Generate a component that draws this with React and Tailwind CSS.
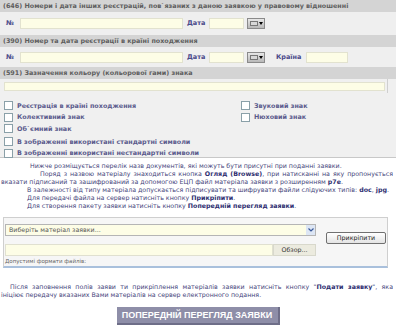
import React from "react";

function CalBtn() {
  return (
    <div className="w-[18px] h-[11px] border border-[#8a8a8a] bg-gradient-to-b from-[#e8e8e8] to-[#b8b8b8] flex items-center justify-end pr-[1px] gap-[1px]">
      <div className="w-[8px] h-[5px] border border-[#777] bg-[#d8d8d8]" />
      <div className="w-0 h-0 border-l-[2px] border-r-[2px] border-t-[3px] border-l-transparent border-r-transparent border-t-black" />
    </div>
  );
}

function Check({ label }) {
  return (
    <div className="flex items-center h-[11.5px]">
      <div className="w-[9px] h-[9px] border border-[#8aa0a8] bg-white mr-[4px] shrink-0" />
      <span className="font-bold text-[6.4px] text-[#5a5a8c] whitespace-nowrap">{label}</span>
    </div>
  );
}

function Header({ children }) {
  return (
    <div className="h-[12px] bg-[#d4d4d4] pl-[3px] flex items-center font-bold text-[6.4px] text-[#5e5e5e] whitespace-nowrap">
      {children}
    </div>
  );
}

export default function App() {
  const yellow = "bg-[#fdfde6] border border-[#e2e2cf]";
  const lbl = "font-bold text-[6.5px] text-[#4a4a8a]";
  const b = "text-[#2e2e70]";
  return (
    <div className="w-[396px] h-[336px] bg-white overflow-hidden font-['DejaVu_Sans',sans-serif] text-[6.3px] leading-none">
      <Header>(646) Номери і дата інших реєстрацій, пов`язаних з даною заявкою у правовому відношенні</Header>
      <div className="h-[23px] bg-[#efefef] flex items-center">
        <span className={`w-[20px] pl-[6px] ${lbl}`}>№</span>
        <div className={`w-[163px] h-[11px] ${yellow}`} />
        <span className={`ml-[4px] w-[22px] ${lbl}`}>Дата</span>
        <div className={`w-[35px] h-[11px] ${yellow}`} />
        <div className="ml-[3px]"><CalBtn /></div>
      </div>
      <Header>(390) Номер та дата реєстрації в країні походження</Header>
      <div className="h-[20px] bg-[#efefef] flex items-center">
        <span className={`w-[20px] pl-[6px] ${lbl}`}>№</span>
        <div className={`w-[163px] h-[11px] ${yellow}`} />
        <span className={`ml-[4px] w-[22px] ${lbl}`}>Дата</span>
        <div className={`w-[35px] h-[11px] ${yellow}`} />
        <div className="ml-[3px]"><CalBtn /></div>
        <span className={`ml-[11px] w-[30px] ${lbl}`}>Країна</span>
        <div className={`w-[42px] h-[11px] ${yellow}`} />
      </div>
      <Header>(591) Зазначення кольору (кольорової гами) знака</Header>
      <div className="h-[79px] bg-[#f0f0f0] border-b border-[#c8c8c8] pt-[3px] pl-[4px]">
        <div className="flex items-start">
          <div className={`w-[381px] h-[9px] ${yellow}`} />
          <div className="ml-[2px] w-[1px] h-[14px] bg-[#cfcfcf] -mt-[3px]" />
        </div>
        <div className="mt-[7px] flex">
          <div className="w-[237px]">
            <Check label="Реєстрація в країні походження" />
            <Check label="Колективний знак" />
            <Check label="Об`ємний знак" />
          </div>
          <div>
            <Check label="Звуковий знак" />
            <Check label="Нюховий знак" />
          </div>
        </div>
        <div className="mt-[1.5px]">
          <Check label="В зображенні використані стандартні символи" />
          <Check label="В зображенні використані нестандартні символи" />
        </div>
      </div>

      <div className="mt-[4px] text-[#44447a] leading-[8px] whitespace-nowrap">
        <div className="pl-[30px]">Нижче розміщується перелік назв документів, які можуть бути присутні при поданні заявки.</div>
        <div className="pl-[40px] w-[393px] text-justify [text-align-last:justify] whitespace-normal h-[8px] overflow-hidden">
          Поряд з назвою матеріалу знаходиться кнопка <b className={b}>Огляд (Browse)</b>, при натисканні на яку пропонується
        </div>
        <div className="pl-[1px]">вказати підписаний та зашифрований за допомогою ЕЦП файл матеріала заявки з розширенням <b className={b}>p7e</b>.</div>
        <div className="pl-[27px]">В залежності від типу матеріала допускається підписувати та шифрувати файли слідуючих типів: <b className={b}>doc</b>, <b className={b}>jpg</b>.</div>
        <div className="pl-[27px]">Для передачі файла на сервер натисніть кнопку <b className={b}>Прикріпити</b>.</div>
        <div className="pl-[27px]">Для створення пакету заявки натисніть кнопку <b className={b}>Попередній перегляд заявки</b>.</div>
      </div>

      <div className="mt-[7px] ml-[3px] w-[385px] h-[51px] border-t border-l border-r border-[#cfcfcf] border-b-2 border-b-[#a9c0dc] bg-[#f6f6f6] pt-[6px] pl-[1px]">
        <div className="flex">
          <div className="w-[311px]">
            <div className="h-[12px] bg-[#fdfde6] border border-[#b5b5b5] flex items-center">
              <span className="pl-[3px] flex-1 text-[#555]">Виберіть матеріал заявки...</span>
              <div className="w-[9px] h-[10px] bg-[#dde6f4] flex items-center justify-center">
                <svg width="6" height="4" viewBox="0 0 6 4"><path d="M0.5 0.5 L3 3 L5.5 0.5" stroke="#3a5a9a" strokeWidth="1.2" fill="none" /></svg>
              </div>
            </div>
            <div className="mt-[8px] flex h-[12px]">
              <div className="w-[268px] bg-[#fdfde6] border border-[#e0e0d0]" />
              <div className="w-[43px] bg-[#ecebdf] border border-[#d8d8cc] flex items-center justify-center text-[#333]">Обзор...</div>
            </div>
          </div>
          <div className="ml-[10px] mt-[8px] w-[60px] h-[12px] border border-[#707070] rounded-[2px] bg-gradient-to-b from-[#ffffff] to-[#e4e4e4] flex items-center justify-center text-[#222]">
            Прикріпити
          </div>
        </div>
        <div className="mt-[3px] text-[5.5px] text-[#666]">Допустимі формати файлів:</div>
      </div>

      <div className="mt-[15px] text-[#44447a] leading-[8px] whitespace-nowrap">
        <div className="pl-[10px] w-[393px] text-justify [text-align-last:justify] whitespace-normal h-[8px] overflow-hidden">
          Після заповнення полів заяви ти прикріплення матеріалів заявки натисніть кнопку "<b className={b}>Подати заявку</b>", яка
        </div>
        <div className="pl-[1px]">ініціює передачу вказаних Вами матеріалів на сервер електронного подання.</div>
      </div>

      <div className="mt-[8px] mx-auto w-[163px] h-[18px] bg-[#8e8ea8] border-r-2 border-b-2 border-[#6e6e88] flex items-center justify-center font-['Liberation_Sans',sans-serif] font-bold text-[9px] text-white whitespace-nowrap">
        ПОПЕРЕДНІЙ ПЕРЕГЛЯД ЗАЯВКИ
      </div>
    </div>
  );
}
